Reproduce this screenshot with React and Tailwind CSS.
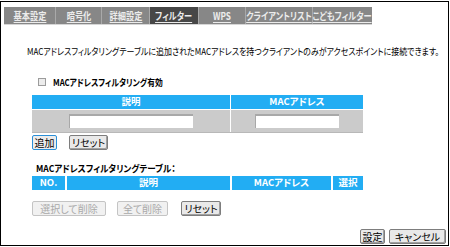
import React from "react";

const tabs = [
  { t: "基本設定", cls: "w-[52px]" },
  { t: "暗号化", cls: "w-[46px]" },
  { t: "詳細設定", cls: "w-[48px]" },
  { t: "フィルター", cls: "w-[49px] bg-[#474747]" },
  { t: "WPS", cls: "w-[47px]" },
  { t: "クライアントリスト", cls: "w-[67px]" },
  { t: "こどもフィルター", cls: "w-[59px] border-r-0" },
];

function Btn({ children, cls = "", disabled = false, focus = false }) {
  return (
    <div
      className={
        "flex items-center justify-center h-[15px] rounded-[2px] text-[10px] leading-none whitespace-nowrap " +
        (disabled
          ? "border border-[#c4c4c4] bg-[#f1f1f1] text-[#a9a9a9] "
          : focus
          ? "border border-[#2a8fd8] bg-[#ececec] text-black "
          : "border border-[#7d7d7d] bg-[#e9e9e9] text-black shadow-[inset_-1px_-1px_0_#a0a0a0] ") +
        cls
      }
    >
      {children}
    </div>
  );
}

export default function App() {
  return (
    <div className="w-[450px] h-[247px] bg-white pt-[1px] overflow-hidden font-['Noto_Sans_CJK_JP','Noto_Sans',sans-serif] [font-feature-settings:'palt'] text-black">
      <div className="w-[449px] h-[245px] border border-black flex flex-col overflow-hidden">
        {/* tab bar */}
        <div className="mt-[5px] ml-[3px] flex flex-col w-[368px]">
          <div className="flex h-[17px] bg-[#878787]">
            {tabs.map((tb) => (
              <div
                key={tb.t}
                className={
                  "flex items-center justify-center h-full border-r border-[#a9a9a9] " +
                  tb.cls
                }
              >
                <span className="block whitespace-nowrap text-[10px] font-bold leading-none text-[#ececec] underline underline-offset-[2px] scale-x-[0.82]">
                  {tb.t}
                </span>
              </div>
            ))}
          </div>
          <div className="h-[1px] bg-[#d6d6d6]" />
        </div>

        {/* description */}
        <div className="mt-[20px] ml-[26px] text-[9.5px] leading-[12px] whitespace-nowrap origin-left scale-x-[0.84]">
          MACアドレスフィルタリングテーブルに追加されたMACアドレスを持つクライアントのみがアクセスポイントに接続できます。
        </div>

        {/* checkbox */}
        <div className="mt-[19px] ml-[37px] flex items-center">
          <div className="w-[8px] h-[8px] border border-[#9c9c9c] bg-[#ececec]" />
          <div className="ml-[7px] text-[9.5px] leading-[12px] font-bold whitespace-nowrap origin-left scale-x-[0.82]">
            MACアドレスフィルタリング有効
          </div>
        </div>

        {/* table 1 */}
        <div className="mt-[7px] ml-[31px] w-[331px] flex flex-col">
          <div className="flex h-[14px] gap-[1px]">
            <div className="w-[198px] bg-[#22adf3] text-white text-[9.5px] font-bold flex items-center justify-center leading-none">
              説明
            </div>
            <div className="flex-1 bg-[#22adf3] text-white text-[9.5px] font-bold flex items-center justify-center leading-none">
              MACアドレス
            </div>
          </div>
          <div className="flex h-[23px] gap-[1px] mt-[1px] border-b border-[#b8b8b8]">
            <div className="w-[198px] bg-[#cbcbcb] flex items-center justify-center">
              <div className="w-[124px] h-[14px] bg-white border-t-2 border-l border-[#a8a8a8]" />
            </div>
            <div className="flex-1 bg-[#cbcbcb] flex items-center justify-center">
              <div className="w-[84px] h-[14px] bg-white border-t-2 border-l border-[#a8a8a8]" />
            </div>
          </div>
        </div>

        <div className="mt-[2px] ml-[31px] flex gap-[12px]">
          <Btn cls="w-[25px]" focus>追加</Btn>
          <Btn cls="w-[39px]">リセット</Btn>
        </div>

        {/* table 2 */}
        <div className="mt-[12px] ml-[35px] text-[9.5px] leading-[12px] font-bold whitespace-nowrap origin-left scale-x-[0.9]">
          MACアドレスフィルタリングテーブル：
        </div>
        <div className="mt-[2px] ml-[31px] w-[331px] flex h-[14px] gap-[2px] text-white text-[9.5px] font-bold leading-none">
          <div className="w-[33px] bg-[#22adf3] flex items-center justify-center">NO.</div>
          <div className="w-[163px] bg-[#22adf3] flex items-center justify-center">説明</div>
          <div className="w-[99px] bg-[#22adf3] flex items-center justify-center">MACアドレス</div>
          <div className="flex-1 bg-[#22adf3] flex items-center justify-center">選択</div>
        </div>

        <div className="mt-[11px] ml-[31px] flex">
          <Btn cls="w-[74px]" disabled>選択して削除</Btn>
          <Btn cls="w-[51px] ml-[11px]" disabled>全て削除</Btn>
          <Btn cls="w-[40px] ml-[13px]">リセット</Btn>
        </div>

        <div className="mt-[13px] mr-[2px] flex justify-end gap-[4px]">
          <Btn cls="w-[25px]">設定</Btn>
          <Btn cls="w-[57px]">キャンセル</Btn>
        </div>
      </div>
    </div>
  );
}
